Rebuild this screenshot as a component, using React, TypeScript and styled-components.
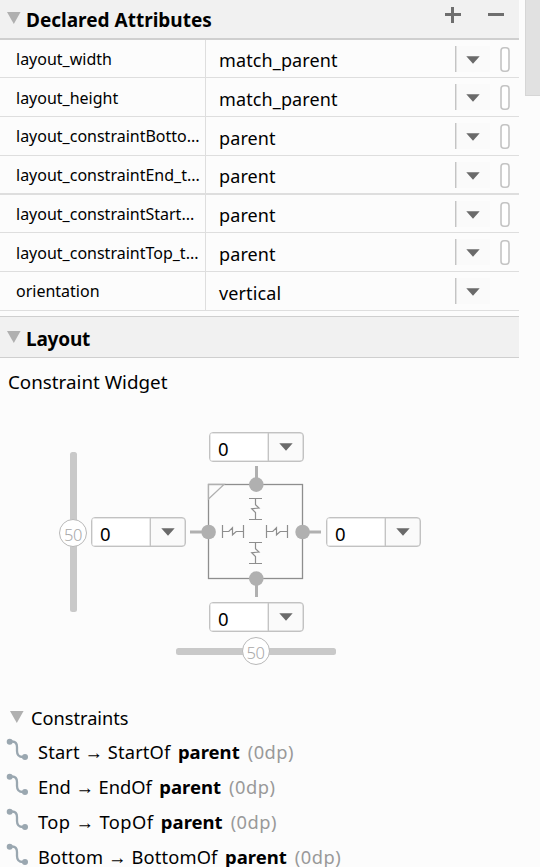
import React from "react";
import styled, { createGlobalStyle } from "styled-components";

const GlobalStyle = createGlobalStyle`
  * { box-sizing: border-box; }
  body {
    margin: 0;
    background: #fcfcfc;
    color: #000;
    font-family: "Noto Sans", "Open Sans", sans-serif;
    overflow: hidden;
  }
  svg { display: block; flex: none; }
`;

const Window = styled.div`
  display: flex;
  justify-content: space-between;
  height: 867px;
  overflow: hidden;
`;

const Panel = styled.main`
  width: 519px;
`;

const ScrollThumb = styled.div`
  width: 15px;
  height: 96px;
  background: #e1e1e1;
  border: 1px solid #d6d6d6;
  border-top: 0;
  border-right: 0;
`;

const SectionHeader = styled.header<{ $height: number; $line: number; $topLine?: boolean }>`
  display: flex;
  align-items: center;
  height: ${(p) => p.$height}px;
  padding: ${(p) => (p.$topLine ? 2 : 0)}px 15px 0 7px;
  background: #f1f1f1;
  border-bottom: ${(p) => p.$line}px solid #cfcfcf;
  border-top: ${(p) => (p.$topLine ? "1px solid #cfcfcf" : "0")};
`;

const Disclosure = styled.svg`
  margin-bottom: 2px;
`;

const SectionTitle = styled.h2<{ $track?: number }>`
  flex: 1;
  margin: 0 0 0 5px;
  padding-top: 2px;
  font-size: 19px;
  line-height: 24px;
  font-weight: 700;
  letter-spacing: ${(p) => p.$track ?? 0}px;
  white-space: nowrap;
`;

const HeaderActions = styled.div`
  display: flex;
  gap: 27px;
  margin-bottom: 9px;
`;

const Table = styled.section`
  display: flex;
  flex-direction: column;
  margin-bottom: 5px;
`;

const Row = styled.div<{ $height: number; $line: number }>`
  display: flex;
  height: ${(p) => p.$height}px;
  border-bottom: ${(p) => p.$line}px solid #dedede;
`;

const NameCell = styled.div<{ $drop: number }>`
  display: flex;
  align-items: center;
  width: 206px;
  padding: ${(p) => p.$drop}px 0 0 16px;
  border-right: 1px solid #dedede;
  font-size: 16px;
  white-space: nowrap;
`;

const ValueCell = styled.div`
  flex: 1;
  display: flex;
  align-items: center;
  padding: 3px 0 0 13px;
  font-size: 18px;
  letter-spacing: 0.12px;
`;

const RowControls = styled.div`
  display: flex;
  align-items: center;
  width: 64px;
  gap: 10px;
`;

const RowDropdown = styled.div`
  display: grid;
  place-items: center;
  width: 35px;
  height: 26px;
  padding-top: 2px;
  border-left: 1px solid #c4c4c4;
  box-shadow: inset 1px 0 #e2e2e2;
  background: #fafafa;
`;

const ResourcePill = styled.svg`
  margin-top: 1px;
`;

const WidgetTitle = styled.h3`
  margin: 0;
  padding: 10px 0 1px 8px;
  font-size: 18.8px;
  line-height: 28px;
  font-weight: 400;
`;

const Widget = styled.section`
  display: grid;
  grid-template-columns: 28px 95px 131px 95px;
  grid-template-rows: 30px 131px 30px 28px;
  column-gap: 4px;
  row-gap: 4px;
  align-items: center;
  justify-items: center;
  margin: 35px 0 0 59px;
  height: 235px;
`;

const Combo = styled.div<{ $column: number; $row: number }>`
  grid-column: ${(p) => p.$column};
  grid-row: ${(p) => p.$row};
  display: flex;
  width: 95px;
  height: 30px;
  margin-left: ${(p) => (p.$column > 2 ? 2 : 0)}px;
  margin-top: ${(p) => (p.$row === 3 ? 2 : 0)}px;
  border: 1px solid #c2c2c2;
  border-radius: 4px;
  box-shadow: inset 0 0 0 0.5px #c8c8c8;
  overflow: hidden;
  background: #fafafa;
`;

const ComboValue = styled.div`
  width: 59px;
  padding: 4px 0 0 8px;
  border-right: 1px solid #c4c4c4;
  background: #fff;
  box-shadow: inset 0 0 0 0.5px #d0d0d0;
  font-size: 18.5px;
  line-height: 24px;
`;

const ComboArrow = styled.div`
  flex: 1;
  display: grid;
  place-items: center;
`;

const Bias = styled.div<{ $vertical?: boolean }>`
  grid-column: ${(p) => (p.$vertical ? 1 : 3)};
  grid-row: ${(p) => (p.$vertical ? 2 : 4)};
  display: grid;
  place-items: center;
  width: ${(p) => (p.$vertical ? 27 : 160)}px;
  height: ${(p) => (p.$vertical ? 160 : 28)}px;
  margin-left: ${(p) => (p.$vertical ? -1 : 0)}px;
  margin-top: ${(p) => (p.$vertical ? 0 : 4)}px;

  &::before {
    content: "";
    grid-area: 1 / 1;
    width: ${(p) => (p.$vertical ? 7 : 160)}px;
    height: ${(p) => (p.$vertical ? 160 : 7)}px;
    border-radius: 2.5px;
    background: #c9c9c9;
  }
`;

const BiasKnob = styled.div<{ $drop?: number }>`
  grid-area: 1 / 1;
  width: 28px;
  height: 28px;
  margin-top: ${(p) => p.$drop ?? 0}px;
  border: 1px solid #b8b8b8;
  border-radius: 50%;
  background: #fff;
  color: #a8a8a8;
  font-size: 16.5px;
  font-weight: 300;
  line-height: 29px;
  letter-spacing: -0.4px;
  text-align: center;
`;

const Inspector = styled.svg`
  grid-column: 3;
  grid-row: 2;
`;

const Constraints = styled.section`
  margin-top: 34px;
`;

const ConstraintsTitle = styled.h3`
  display: flex;
  align-items: center;
  gap: 7px;
  height: 33px;
  margin: 0;
  padding-left: 10px;
  font-size: 18.2px;
  font-weight: 400;
`;

const ConstraintRow = styled.div`
  display: flex;
  align-items: center;
  height: 35px;
  padding-left: 6px;
  font-size: 18.3px;
  white-space: nowrap;
`;

const ConnectionIcon = styled.svg`
  margin: 0 9px 5px 0;
`;

const Relation = styled.span<{ $track: number }>`
  letter-spacing: ${(p) => p.$track}px;
`;

const Target = styled.b`
  margin-left: 7.5px;
  font-size: 18.5px;
`;

const Margin = styled.span`
  margin-left: 8px;
  color: #999;
  letter-spacing: 0.5px;
`;

const Triangle = () => (
  <Disclosure width="14" height="12" viewBox="0 0 14 12">
    <path d="M0 0H13.6L6.8 12Z" fill="#b0b0b0" />
  </Disclosure>
);

const Caret = () => (
  <svg width="14" height="8" viewBox="0 0 14 8">
    <path d="M0.3 0.3H13.7L7 7.7Z" fill="#6a6a6a" />
  </svg>
);

const NumberCombo = ({ column, row }: { column: number; row: number }) => (
  <Combo $column={column} $row={row}>
    <ComboValue>0</ComboValue>
    <ComboArrow>
      <Caret />
    </ComboArrow>
  </Combo>
);

const attributes = [
  { name: "layout_width", value: "match_parent", height: 38, line: 1, drop: 0, pill: true },
  { name: "layout_height", value: "match_parent", height: 39, line: 1, drop: 2, pill: true },
  { name: "layout_constraintBotto...", value: "parent", height: 39, line: 1, drop: 0, pill: true },
  { name: "layout_constraintEnd_t...", value: "parent", height: 39, line: 2, drop: 0, pill: true },
  { name: "layout_constraintStart...", value: "parent", height: 38, line: 1, drop: 0, pill: true },
  { name: "layout_constraintTop_t...", value: "parent", height: 39, line: 1, drop: 2, pill: true },
  { name: "orientation", value: "vertical", height: 39, line: 1, drop: 0, pill: false },
];

const constraints = [
  { relation: "Start → StartOf", track: 0.13 },
  { relation: "End → EndOf", track: 0 },
  { relation: "Top → TopOf", track: 0.42 },
  { relation: "Bottom → BottomOf", track: 0.15 },
];

const springAcross = "M0 -6.5V6.5M21 -6.5V6.5M0 0H6.3L10 -3.8V3.3L13.7 0H21";
const springDown = "M-6.5 0H6.5M-6.5 21H6.5M0 0V6.3L3.5 9.5L-3.8 10.2L0 14V21";

export default function App() {
  return (
    <>
      <GlobalStyle />
      <Window>
        <Panel>
          <SectionHeader $height={40} $line={2}>
            <Triangle />
            <SectionTitle>Declared Attributes</SectionTitle>
            <HeaderActions>
              <svg width="16" height="16" viewBox="0 0 16 16">
                <path d="M7.5 0V16M0 7.5H16" stroke="#6e6e6e" strokeWidth="3" />
              </svg>
              <svg width="16" height="16" viewBox="0 0 16 16">
                <path d="M0 7.5H16" stroke="#6e6e6e" strokeWidth="3" />
              </svg>
            </HeaderActions>
          </SectionHeader>
          <Table>
            {attributes.map((a) => (
              <Row key={a.name} $height={a.height} $line={a.line}>
                <NameCell $drop={a.drop}>{a.name}</NameCell>
                <ValueCell>{a.value}</ValueCell>
                <RowControls>
                  <RowDropdown>
                    <Caret />
                  </RowDropdown>
                  {a.pill && (
                    <ResourcePill width="10" height="25" viewBox="0 0 10 25">
                      <rect x="1" y="0.8" width="8" height="23.4" rx="3" fill="#fff" stroke="#c4c4c4" strokeWidth="1.6" />
                    </ResourcePill>
                  )}
                </RowControls>
              </Row>
            ))}
          </Table>
          <SectionHeader $height={42} $line={1} $topLine>
            <Triangle />
            <SectionTitle $track={-0.2}>Layout</SectionTitle>
          </SectionHeader>
          <WidgetTitle>Constraint Widget</WidgetTitle>
          <Widget>
            <NumberCombo column={3} row={1} />
            <Bias $vertical>
              <BiasKnob $drop={2}>50</BiasKnob>
            </Bias>
            <NumberCombo column={2} row={2} />
            <Inspector width="131" height="131" viewBox="190 466 131 131">
              <rect x="208.5" y="484.5" width="94" height="94" fill="none" stroke="#8e8e8e" strokeWidth="1.3" />
              <path d="M208.5 499V484.5H224Z" fill="#fcfcfc" stroke="#b0b0b0" strokeWidth="1.3" />
              <path
                d="M256.5 466V484M256.5 579V597M190 532H208M303 532H321"
                stroke="#b0b0b0"
                strokeWidth="3"
              />
              <g fill="#b0b0b0">
                <circle cx="256.3" cy="484.6" r="7.3" />
                <circle cx="256.3" cy="578.6" r="7.3" />
                <circle cx="208.6" cy="532" r="7.3" />
                <circle cx="302.6" cy="532" r="7.3" />
              </g>
              <g fill="none" stroke="#8e8e8e" strokeWidth="1.2">
                <path d={springAcross} transform="translate(222.5 531.5)" />
                <path d={springAcross} transform="translate(266.5 531.5)" />
                <path d={springDown} transform="translate(255.5 498.5)" />
                <path d={springDown} transform="translate(255.5 542.5)" />
              </g>
            </Inspector>
            <NumberCombo column={4} row={2} />
            <NumberCombo column={3} row={3} />
            <Bias>
              <BiasKnob>50</BiasKnob>
            </Bias>
          </Widget>
          <Constraints>
            <ConstraintsTitle>
              <Triangle />
              Constraints
            </ConstraintsTitle>
            {constraints.map((c) => (
              <ConstraintRow key={c.relation}>
                <ConnectionIcon width="23" height="23" viewBox="0 0 23 23">
                  <circle cx="3.7" cy="3.7" r="3" fill="#9aa7b0" />
                  <circle cx="19" cy="19" r="3" fill="#9aa7b0" />
                  <path d="M4 3.5H6Q11 3.5 11 9V13Q11 19 17 19H19" fill="none" stroke="#9aa7b0" strokeWidth="2.3" />
                </ConnectionIcon>
                <Relation $track={c.track}>{c.relation}</Relation>
                <Target>parent</Target>
                <Margin>(0dp)</Margin>
              </ConstraintRow>
            ))}
          </Constraints>
        </Panel>
        <ScrollThumb />
      </Window>
    </>
  );
}
